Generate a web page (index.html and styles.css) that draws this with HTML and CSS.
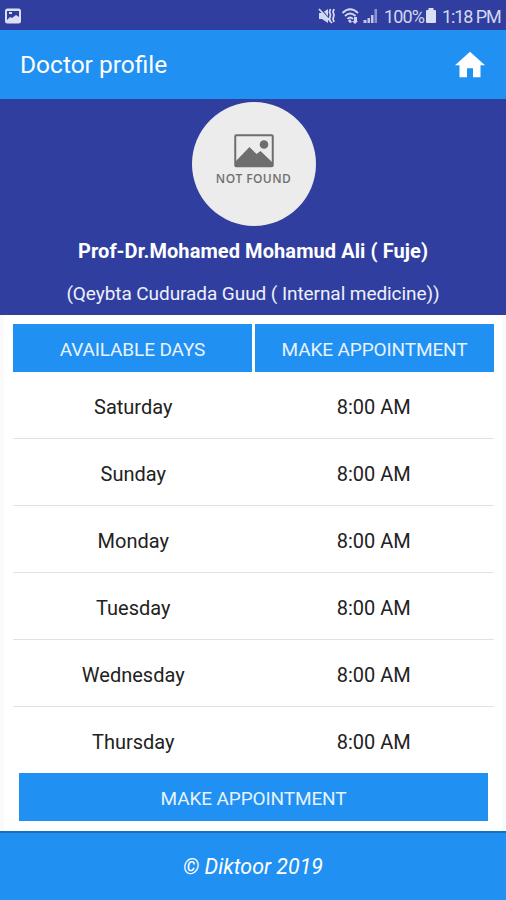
FILE: index.html
```html
<!DOCTYPE html>
<html lang="en">
<head>
<meta charset="utf-8">
<title>Doctor profile</title>
<link rel="stylesheet" href="styles.css">
</head>
<body>
<div class="status">
  <svg class="shot" viewBox="0 0 18 16"><rect x="1" y="0.5" width="16" height="15" rx="2.500" fill="#dcdff3"/><path d="M3 3h12v6l-3-2-4 3-2-1-3 3z" fill="#303f9f"/><path d="M5 4h3v2H5z" fill="#dcdff3"/></svg>
  <svg class="mute" viewBox="0 0 18 18"><path d="M1 6h3l6-4v14l-6-4H1z" fill="#d3d7f0"/><path d="M2 1l11 13" stroke="#303f9f" stroke-width="1.200"/><path d="M1 2l13 14M12.500 2l-1 3 1 3-1 4 1 3M16 2l-1 3 1 3-1 4 1 3" fill="none" stroke="#d3d7f0" stroke-width="1.800"/></svg>
  <svg class="wifi" viewBox="0 0 20 18"><path d="M1.500 6Q9 -1.500 17 6M4 9Q9 4 14.500 9M6.500 12Q9 9 12 12" fill="none" stroke="#d3d7f0" stroke-width="1.800"/><path d="M9 12l2 3-2 1-2-2zM13 10v4h-2l3 3 3-3h-1v-4z" fill="#d3d7f0"/></svg>
  <svg class="signal" viewBox="0 0 16 16"><path d="M0.500 15v-3h3v3zM4.500 15v-5h2.500v5zM8 15V7h2.500v8z" fill="#c3c8ea"/><path d="M11.500 15V1H14v14z" fill="#8b93cf"/></svg>
  <span class="percent">100%</span>
  <svg class="battery" viewBox="0 0 12 16"><path d="M3.500 0h5v2H10q1 0 1 1v11q0 1-1 1H2q-1 0-1-1V3q0-1 1-1h1.500z" fill="#dcdff3"/></svg>
  <span class="clock">1:18 PM</span>
</div>
<header class="bar">
  <h1>Doctor profile</h1>
  <svg class="home" viewBox="2 3 20 17"><path d="M10 20v-6h4v6h5v-8h3L12 3 2 12h3v8z" fill="#fff"/></svg>
</header>
<section class="profile">
  <div class="avatar">
    <svg class="photo" viewBox="0 0 40 34"><rect x="1.250" y="1.250" width="37.500" height="31" rx="1" fill="#ececec" stroke="#6e6e6e" stroke-width="2"/><circle cx="30" cy="10.500" r="4.300" fill="#6e6e6e"/><path d="M2 32V27L15.500 13l7 7 4-3L38 28v4z" fill="#6e6e6e"/></svg>
    <span>NOT FOUND</span>
  </div>
  <div class="name"><span>Prof-Dr.Mohamed Mohamud Ali ( Fuje)</span></div>
  <div class="field"><span>(Qeybta Cudurada Guud ( Internal medicine))</span></div>
</section>
<main>
  <div class="heads"><div><span>AVAILABLE DAYS</span></div><div><span>MAKE APPOINTMENT</span></div></div>
  <div class="row"><span>Saturday</span><span>8:00 AM</span></div>
  <div class="row"><span>Sunday</span><span>8:00 AM</span></div>
  <div class="row"><span>Monday</span><span>8:00 AM</span></div>
  <div class="row"><span>Tuesday</span><span>8:00 AM</span></div>
  <div class="row"><span>Wednesday</span><span>8:00 AM</span></div>
  <div class="row last"><span>Thursday</span><span>8:00 AM</span></div>
  <div class="book"><span>MAKE APPOINTMENT</span></div>
</main>
<footer><span>© Diktoor 2019</span></footer>
</body>
</html>
```
FILE: styles.css
```css
* { box-sizing: border-box; }
body {
  margin: 0;
  width: 506px;
  height: 900px;
  overflow: hidden;
  display: flex;
  flex-direction: column;
  font-family: Roboto, sans-serif;
  background: #fff;
}
svg { display: block; flex: none; }
.status {
  height: 30px;
  background: #303f9f;
  color: #d3d7f0;
  display: flex;
  align-items: center;
  padding: 2px 6px 0 4px;
  font-size: 18px;
  white-space: nowrap;
}
.shot { width: 18px; height: 16px; margin-right: auto; }
.mute { width: 18px; height: 18px; margin-right: 5px; }
.wifi { width: 20px; height: 18px; margin-right: 2px; }
.signal { width: 16px; height: 16px; margin-right: 5px; }
.percent { width: 39px; letter-spacing: -0.9px; }
.battery { width: 12px; height: 16px; margin: 0 5px 0 2px; }
.clock { width: 58px; letter-spacing: -1.1px; }
.bar {
  height: 69px;
  background: #2190f3;
  color: #fff;
  display: flex;
  align-items: center;
  justify-content: space-between;
  padding: 0 21px 0 20px;
}
h1 {
  margin: 0;
  padding-top: 1px;
  font-size: 24.5px;
  font-weight: 400;
  line-height: 30px;
}
.home { width: 30px; height: 27px; }
.profile {
  height: 216px;
  background: #303f9f;
  color: #fff;
  display: flex;
  flex-direction: column;
  align-items: center;
  padding-top: 3px;
  white-space: nowrap;
}
.avatar {
  width: 124px;
  height: 124px;
  margin-left: 1px;
  border-radius: 50%;
  background: #ececec;
  display: flex;
  flex-direction: column;
  align-items: center;
  padding-top: 32px;
  color: #707070;
  font: 600 12px/16px "Open Sans", sans-serif;
  letter-spacing: 0.4px;
}
.photo { width: 40px; height: 34px; margin-bottom: 3px; }
.name {
  margin-top: 13px;
  font-size: 20px;
  font-weight: 700;
  line-height: 24px;
  letter-spacing: 0.08px;
}
.field {
  margin-top: 19px;
  font-size: 19px;
  line-height: 24px;
  letter-spacing: -0.07px;
  color: #eef0fb;
}
main {
  height: 516px;
  padding: 9px 8px 0 9px;
  border: solid #fafafa;
  border-width: 0 4px;
}
.heads { display: grid; grid-template-columns: 239px 239px; gap: 3px; height: 48px; }
.heads div, .book {
  background: #2190f3;
  color: #e6f3fe;
  display: flex;
  align-items: center;
  justify-content: center;
  padding-top: 2px;
  font-size: 19px;
  letter-spacing: -0.12px;
}
.row {
  display: grid;
  grid-template-columns: 1fr 1fr;
  height: 67px;
  padding-top: 3px;
  align-items: center;
  text-align: center;
  font-size: 20px;
  color: #222;
  border-bottom: 1px solid #e2e2e2;
}
.row.last { border: 0; padding-top: 2px; }
.book { height: 48px; margin: -1px 6px 0; }
footer {
  height: 69px;
  background: #2190f3;
  border-top: 2px solid #1472b8;
  color: #fff;
  display: flex;
  align-items: center;
  justify-content: center;
  font-size: 21.4px;
  font-style: italic;
}
```
